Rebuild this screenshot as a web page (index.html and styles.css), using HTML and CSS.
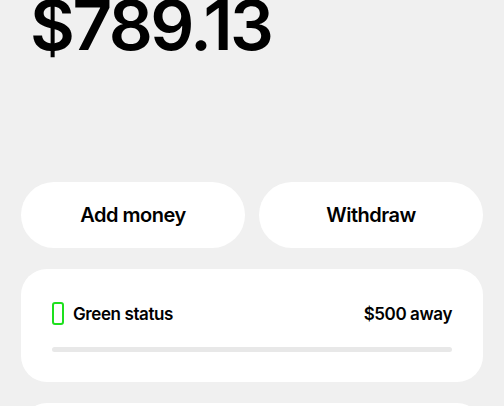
FILE: index.html
```html
<!DOCTYPE html>
<html lang="en">
<head>
    <meta charset="UTF-8">
    <meta name="viewport" content="width=device-width, initial-scale=1.0">
    <title>Balance</title>
    <link rel="stylesheet" href="styles.css">
</head>
<body>

<div class="wallet">
    <div class="balance">$789.13</div>

    <div class="actions">
        <button class="action">Add money</button>
        <button class="action">Withdraw</button>
    </div>

    <div class="card">
        <div class="status-row">
            <div class="status-name">
                <span class="status-icon"></span>
                <span>Green status</span>
            </div>
            <div class="status-away">$500 away</div>
        </div>
        <div class="progress">
            <div class="progress-fill" style="width: 0%"></div>
        </div>
    </div>

    <div class="card"></div>
</div>

</body>
</html>
```

FILE: styles.css
```css
body {
    margin: 0;
    background-color: #f0f0f0;
    color: #000;
    font-family: Inter, "Liberation Sans", sans-serif;
    overflow: hidden;
}

.wallet {
    padding: 0 21px;
}

.balance {
    font-size: 69px;
    font-weight: 600;
    letter-spacing: -2.5px;
    line-height: 1;
    margin-top: -9px;
    padding-left: 9px;
    height: 191px;
}

.actions {
    display: grid;
    grid-template-columns: 1fr 1fr;
    gap: 14px;
}

.action {
    height: 66px;
    border: none;
    border-radius: 33px;
    background-color: #fff;
    color: #000;
    font-family: inherit;
    font-size: 20px;
    font-weight: 600;
    letter-spacing: -0.5px;
    cursor: pointer;
}

.card {
    background-color: #fff;
    border-radius: 26px;
    margin-top: 21px;
    padding: 33px 31px 30px;
    height: 113px;
    box-sizing: border-box;
}

.status-row {
    display: flex;
    justify-content: space-between;
    align-items: center;
    font-size: 17px;
    font-weight: 600;
    letter-spacing: -0.4px;
}

.status-name {
    display: flex;
    align-items: center;
    gap: 9px;
}

.status-icon {
    width: 8px;
    height: 19px;
    border: 2px solid #1ee01e;
    border-radius: 3px;
}

.progress {
    margin-top: 22px;
    height: 5px;
    border-radius: 3px;
    background-color: #e8e8e8;
}

.progress-fill {
    height: 100%;
    border-radius: 3px;
    background-color: #1ee01e;
}
```
